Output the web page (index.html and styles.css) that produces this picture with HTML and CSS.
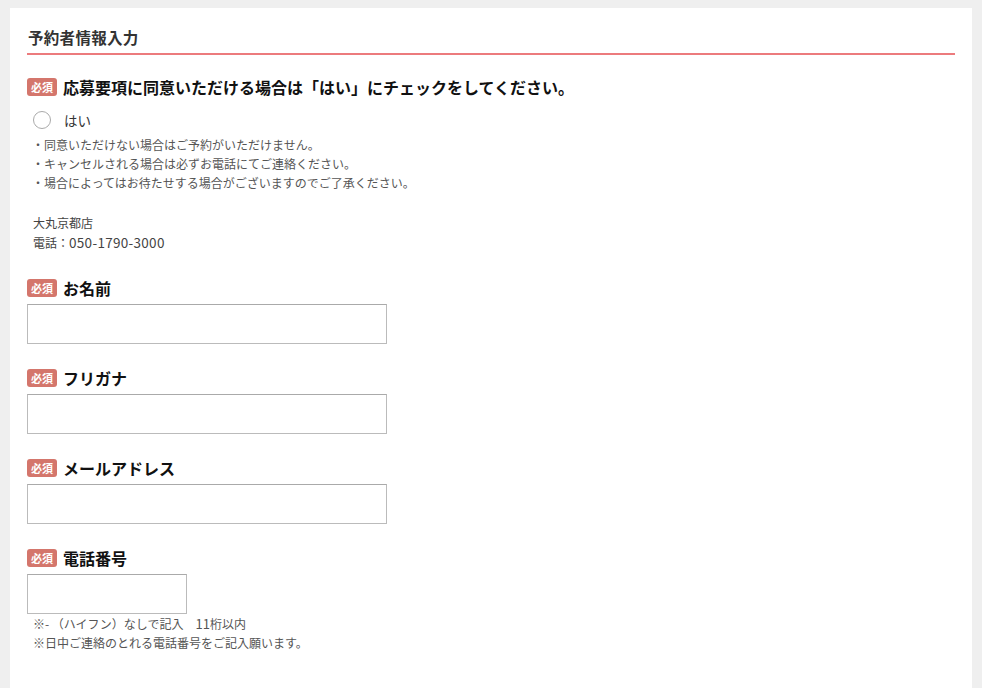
FILE: index.html
```html
<!DOCTYPE html>
<html lang="ja">
<head>
<meta charset="utf-8">
<title>予約者情報入力</title>
<link rel="stylesheet" href="styles.css">
</head>
<body>
<div class="card">
  <h2 class="title">予約者情報入力</h2>

  <div class="consent">
    <div class="label"><span class="badge">必須</span><span class="label-text">応募要項に同意いただける場合は「はい」にチェックをしてください。</span></div>
    <label class="radio-row"><span class="radio"></span><span class="radio-text">はい</span></label>
    <ul class="notes">
      <li>・同意いただけない場合はご予約がいただけません。</li>
      <li>・キャンセルされる場合は必ずお電話にてご連絡ください。</li>
      <li>・場合によってはお待たせする場合がございますのでご了承ください。</li>
    </ul>
    <div class="store">
      <div class="store-line">大丸京都店</div>
      <div class="store-line">電話：<span class="num">050-1790-3000</span></div>
    </div>
  </div>

  <div class="field">
    <div class="label"><span class="badge">必須</span><span class="label-text">お名前</span></div>
    <input class="input" type="text">
  </div>

  <div class="field">
    <div class="label"><span class="badge">必須</span><span class="label-text">フリガナ</span></div>
    <input class="input" type="text">
  </div>

  <div class="field">
    <div class="label"><span class="badge">必須</span><span class="label-text">メールアドレス</span></div>
    <input class="input" type="text">
  </div>

  <div class="field">
    <div class="label"><span class="badge">必須</span><span class="label-text">電話番号</span></div>
    <input class="input input-short" type="text">
    <ul class="hint">
      <li>※- （ハイフン）なしで記入　<span class="num">11</span>桁以内</li>
      <li>※日中ご連絡のとれる電話番号をご記入願います。</li>
    </ul>
  </div>
</div>
</body>
</html>
```

FILE: styles.css
```css
html, body {
  margin: 0;
  padding: 0;
}
body {
  background: #efefef;
  font-family: "Noto Sans CJK JP", "Noto Sans", sans-serif;
  color: #333;
  height: 688px;
  overflow: hidden;
}
.card {
  margin: 8px 10px 0;
  background: #fff;
  padding: 19px 17px 60px;
  min-height: 700px;
  box-sizing: border-box;
}
.title {
  margin: 0;
  font-size: 15.5px;
  line-height: 20px;
  font-weight: bold;
  color: #333;
  padding: 0 0 6px 1px;
  border-bottom: 2px solid #ec7b7d;
  letter-spacing: 0.3px;
}
.consent {
  margin-top: 22px;
}
.label {
  display: flex;
  align-items: center;
  gap: 6px;
  height: 20px;
}
.badge {
  display: inline-flex;
  align-items: center;
  justify-content: center;
  width: 30px;
  height: 18px;
  border-radius: 3px;
  background: #d4766c;
  color: #fff;
  font-size: 11px;
  font-weight: bold;
  letter-spacing: 0;
}
.label-text {
  font-size: 16px;
  font-weight: bold;
  color: #111;
  line-height: 20px;
}
.radio-row {
  display: flex;
  align-items: center;
  gap: 13px;
  margin: 14px 0 0 6px;
  height: 18px;
}
.radio {
  width: 18px;
  height: 18px;
  border: 1.5px solid #aaa;
  border-radius: 50%;
  box-sizing: border-box;
  background: #fff;
}
.radio-text {
  font-size: 13.5px;
  color: #333;
}
.notes, .hint {
  list-style: none;
  margin: 6px 0 0;
  padding: 0 0 0 5px;
  font-size: 12px;
  line-height: 19px;
  color: #555;
}
.store {
  margin-top: 21px;
  padding-left: 6px;
  font-size: 12px;
  line-height: 20px;
  color: #444;
}
.store-line {
  height: 20px;
  overflow: hidden;
}
.store .num {
  font-size: 13.5px;
  line-height: 1;
  letter-spacing: 0.3px;
}
.hint .num {
  font-size: 13px;
  line-height: 1;
}
.field {
  margin-top: 24px;
}
.consent + .field {
  margin-top: 25px;
}
.input {
  display: block;
  margin: 6px 0 0;
  width: 360px;
  height: 40px;
  box-sizing: border-box;
  border: 1px solid #bbb;
  border-top-color: #aaa;
  background: #fff;
  padding: 0 8px;
  font-size: 14px;
  outline: none;
}
.input-short {
  width: 160px;
}
.hint {
  margin-top: 0;
  padding-left: 6px;
}
```
